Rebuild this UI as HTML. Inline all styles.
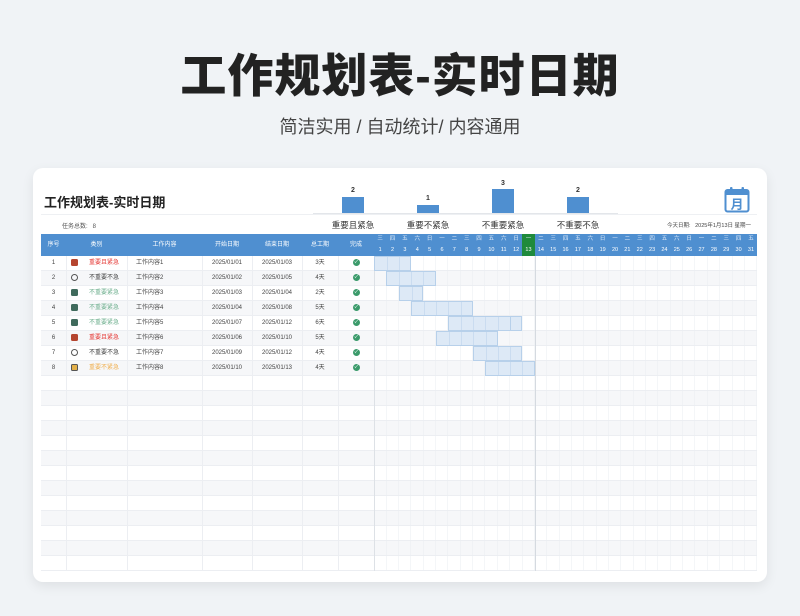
<!DOCTYPE html><html><head><meta charset="utf-8"><style>
*{margin:0;padding:0;box-sizing:border-box}
body{width:800px;height:616px;background:#f0f3f6;font-family:"Liberation Sans","Noto Sans CJK SC",sans-serif;position:relative;overflow:hidden;color:#333}
.a{position:absolute}
h1{position:absolute;left:0;width:800px;top:40px;text-align:center;font-size:46px;font-weight:900;color:#222;letter-spacing:1px}
.sub{position:absolute;left:0;width:800px;top:113px;text-align:center;font-size:18px;color:#444}
.card{position:absolute;left:33px;top:168px;width:734px;height:414px;background:#fff;border-radius:10px;box-shadow:0 4px 12px rgba(0,0,0,.08)}
.hd{position:absolute;left:41px;top:234px;width:716px;height:22px;background:#4f8fd0}
.hc{position:absolute;top:234px;height:22px;line-height:22px;color:#fff;font-size:6px;text-align:center}
.body{position:absolute;left:41px;top:256px;width:716px;height:315px;background:repeating-linear-gradient(#fff 0 14px,#eceef2 14px 15px,#f6f7f9 15px 29px,#eceef2 29px 30px)}
.grid{position:absolute;left:374px;top:256px;width:383px;height:315px;background:repeating-linear-gradient(90deg,transparent 0 11.85px,#eaedf1 11.85px 12.355px)}
.vl{position:absolute;top:256px;width:1px;height:315px;background:#eceef2}
.r{position:absolute;left:41px;width:333px;height:15px;font-size:6px;line-height:15px;color:#444}
.r span{position:absolute;text-align:center}
.bar{position:absolute;height:15px;background:#dde9f6;background-image:repeating-linear-gradient(90deg,transparent 0 11.8px,#b7d0ea 11.8px 12.355px);border:1px solid #b7d0ea}
.days{position:absolute;left:374px;width:383px;display:flex;font-size:5.5px;color:#fff}
.days i{font-style:normal;flex:1;text-align:center;height:11px;line-height:11px}
.sq{display:inline-block;width:7px;height:7px;border-radius:1.5px;vertical-align:middle}
.ck{display:inline-block;width:7px;height:7px;border-radius:50%;background:#3a9a6a;vertical-align:middle;color:#fff;font-size:5px;line-height:7px}
.bb{position:absolute;background:#4f8fd0;width:22px}
.bn{position:absolute;font-size:7px;font-weight:bold;width:22px;text-align:center}
.bl{position:absolute;top:219px;font-size:8.5px;width:80px;text-align:center;color:#333}
</style></head><body>
<h1>工作规划表-实时日期</h1>
<div class="sub">简洁实用 / 自动统计/ 内容通用</div>
<div class="card"></div>
<div class="a" style="left:44px;top:192px;font-size:13px;font-weight:bold;color:#222">工作规划表-实时日期</div>
<div class="a" style="left:41px;top:214px;width:716px;height:1px;background:#eef0f3"></div>
<div class="a" style="left:62px;top:221px;font-size:6px;color:#555">任务总数:&nbsp;&nbsp;&nbsp;8</div>
<div class="a" style="left:313px;top:213px;width:305px;height:1px;background:#e3e6ea"></div>
<div class="bn" style="left:342px;top:187px">2</div><div class="bb" style="left:342px;top:197px;height:16px"></div>
<div class="bn" style="left:417px;top:195px">1</div><div class="bb" style="left:417px;top:205px;height:8px"></div>
<div class="bn" style="left:492px;top:180px">3</div><div class="bb" style="left:492px;top:189px;height:24px"></div>
<div class="bn" style="left:567px;top:187px">2</div><div class="bb" style="left:567px;top:197px;height:16px"></div>
<div class="bl" style="left:313px">重要且紧急</div><div class="bl" style="left:388px">重要不紧急</div><div class="bl" style="left:463px">不重要紧急</div><div class="bl" style="left:538px">不重要不急</div>
<div class="a" style="left:667px;top:221px;font-size:5.5px;color:#444">今天日期:&nbsp;&nbsp;&nbsp;2025年1月13日 星期一</div>
<svg class="a" style="left:724px;top:186px" width="26" height="27" viewBox="0 0 26 27"><rect x="1.5" y="4" width="23" height="21.5" rx="2" fill="none" stroke="#4f8fd0" stroke-width="2"/><rect x="1.5" y="4" width="23" height="5" fill="#4f8fd0"/><rect x="6" y="1" width="2.5" height="6" rx="1" fill="#4f8fd0"/><rect x="17.5" y="1" width="2.5" height="6" rx="1" fill="#4f8fd0"/><text x="13" y="23" text-anchor="middle" font-size="13" font-weight="bold" fill="#4f8fd0" font-family="Noto Sans CJK SC">月</text></svg>
<div class="hd"></div>
<div class="hc" style="left:41px;width:25px">序号</div><div class="hc" style="left:66px;width:61px">类别</div><div class="hc" style="left:127px;width:75px">工作内容</div><div class="hc" style="left:202px;width:50px">开始日期</div><div class="hc" style="left:252px;width:50px">结束日期</div><div class="hc" style="left:302px;width:36px">总工期</div><div class="hc" style="left:338px;width:36px">完成</div>
<div class="a" style="left:522.3px;top:234px;width:12.4px;height:22px;background:#1f8a3c"></div>
<div class="days" style="top:234px;color:#dfeaf7"><i>三</i><i>四</i><i>五</i><i>六</i><i>日</i><i>一</i><i>二</i><i>三</i><i>四</i><i>五</i><i>六</i><i>日</i><i>一</i><i>二</i><i>三</i><i>四</i><i>五</i><i>六</i><i>日</i><i>一</i><i>二</i><i>三</i><i>四</i><i>五</i><i>六</i><i>日</i><i>一</i><i>二</i><i>三</i><i>四</i><i>五</i></div>
<div class="days" style="top:245px"><i>1</i><i>2</i><i>3</i><i>4</i><i>5</i><i>6</i><i>7</i><i>8</i><i>9</i><i>10</i><i>11</i><i>12</i><i>13</i><i>14</i><i>15</i><i>16</i><i>17</i><i>18</i><i>19</i><i>20</i><i>21</i><i>22</i><i>23</i><i>24</i><i>25</i><i>26</i><i>27</i><i>28</i><i>29</i><i>30</i><i>31</i></div>
<div class="body"></div>
<div class="grid"></div>
<div class="vl" style="left:66px"></div><div class="vl" style="left:127px"></div><div class="vl" style="left:202px"></div><div class="vl" style="left:252px"></div><div class="vl" style="left:302px"></div><div class="vl" style="left:338px"></div><div class="vl" style="left:374px;background:#dde1e6"></div>
<div class="vl" style="left:535px;background:#d5dae0"></div>
<div class="bar" style="left:374px;top:256px;width:37px"></div>
<div class="bar" style="left:386.4px;top:271px;width:49.4px"></div>
<div class="bar" style="left:398.7px;top:286px;width:24.7px"></div>
<div class="bar" style="left:411.1px;top:301px;width:61.8px"></div>
<div class="bar" style="left:448.1px;top:316px;width:74.1px"></div>
<div class="bar" style="left:435.8px;top:331px;width:61.8px"></div>
<div class="bar" style="left:472.8px;top:346px;width:49.4px"></div>
<div class="bar" style="left:485.2px;top:361px;width:49.4px"></div>
<div class="r" style="top:256px"><span style="left:0;width:25px">1</span><span style="left:30px"><i class="sq" style="background:#b5452f"></i></span><span style="left:48px;color:#e53935">重要且紧急</span><span style="left:95px">工作内容1</span><span style="left:161px;width:50px">2025/01/01</span><span style="left:211px;width:50px">2025/01/03</span><span style="left:261px;width:36px">3天</span><span style="left:297px;width:36px"><i class="ck">✓</i></span></div>
<div class="r" style="top:271px"><span style="left:0;width:25px">2</span><span style="left:30px"><i class="sq" style="border:1px solid #555;border-radius:50%"></i></span><span style="left:48px">不重要不急</span><span style="left:95px">工作内容2</span><span style="left:161px;width:50px">2025/01/02</span><span style="left:211px;width:50px">2025/01/05</span><span style="left:261px;width:36px">4天</span><span style="left:297px;width:36px"><i class="ck">✓</i></span></div>
<div class="r" style="top:286px"><span style="left:0;width:25px">3</span><span style="left:30px"><i class="sq" style="background:#3f6a5c"></i></span><span style="left:48px;color:#6fb08f">不重要紧急</span><span style="left:95px">工作内容3</span><span style="left:161px;width:50px">2025/01/03</span><span style="left:211px;width:50px">2025/01/04</span><span style="left:261px;width:36px">2天</span><span style="left:297px;width:36px"><i class="ck">✓</i></span></div>
<div class="r" style="top:301px"><span style="left:0;width:25px">4</span><span style="left:30px"><i class="sq" style="background:#3f6a5c"></i></span><span style="left:48px;color:#6fb08f">不重要紧急</span><span style="left:95px">工作内容4</span><span style="left:161px;width:50px">2025/01/04</span><span style="left:211px;width:50px">2025/01/08</span><span style="left:261px;width:36px">5天</span><span style="left:297px;width:36px"><i class="ck">✓</i></span></div>
<div class="r" style="top:316px"><span style="left:0;width:25px">5</span><span style="left:30px"><i class="sq" style="background:#3f6a5c"></i></span><span style="left:48px;color:#6fb08f">不重要紧急</span><span style="left:95px">工作内容5</span><span style="left:161px;width:50px">2025/01/07</span><span style="left:211px;width:50px">2025/01/12</span><span style="left:261px;width:36px">6天</span><span style="left:297px;width:36px"><i class="ck">✓</i></span></div>
<div class="r" style="top:331px"><span style="left:0;width:25px">6</span><span style="left:30px"><i class="sq" style="background:#b5452f"></i></span><span style="left:48px;color:#e53935">重要且紧急</span><span style="left:95px">工作内容6</span><span style="left:161px;width:50px">2025/01/06</span><span style="left:211px;width:50px">2025/01/10</span><span style="left:261px;width:36px">5天</span><span style="left:297px;width:36px"><i class="ck">✓</i></span></div>
<div class="r" style="top:346px"><span style="left:0;width:25px">7</span><span style="left:30px"><i class="sq" style="border:1px solid #555;border-radius:50%"></i></span><span style="left:48px">不重要不急</span><span style="left:95px">工作内容7</span><span style="left:161px;width:50px">2025/01/09</span><span style="left:211px;width:50px">2025/01/12</span><span style="left:261px;width:36px">4天</span><span style="left:297px;width:36px"><i class="ck">✓</i></span></div>
<div class="r" style="top:361px"><span style="left:0;width:25px">8</span><span style="left:30px"><i class="sq" style="background:#e2b04a;border:1px solid #555"></i></span><span style="left:48px;color:#f0b050">重要不紧急</span><span style="left:95px">工作内容8</span><span style="left:161px;width:50px">2025/01/10</span><span style="left:211px;width:50px">2025/01/13</span><span style="left:261px;width:36px">4天</span><span style="left:297px;width:36px"><i class="ck">✓</i></span></div>
</body></html>
